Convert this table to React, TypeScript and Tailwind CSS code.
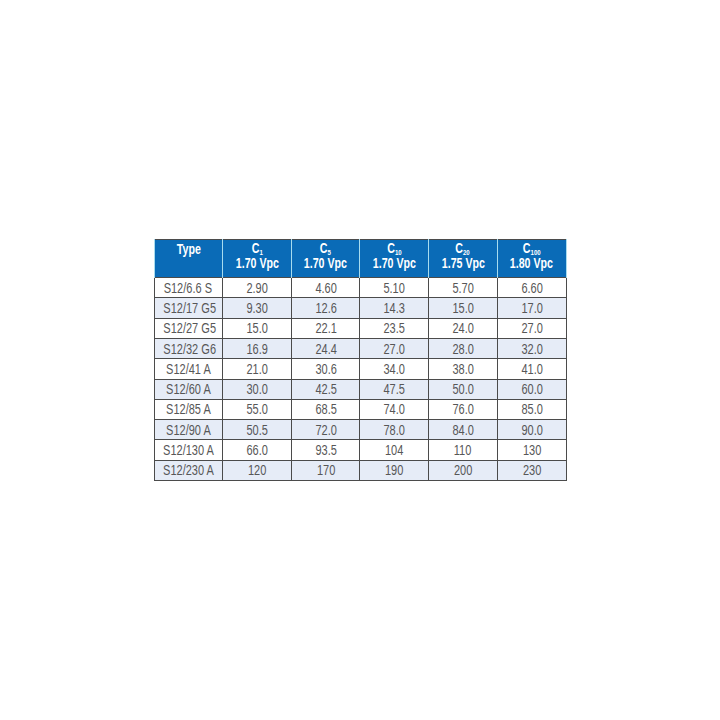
const HEADERS = [
  { sub: "1", volts: "1.70 Vpc" },
  { sub: "5", volts: "1.70 Vpc" },
  { sub: "10", volts: "1.70 Vpc" },
  { sub: "20", volts: "1.75 Vpc" },
  { sub: "100", volts: "1.80 Vpc" },
];

const ROWS: [string, string, string, string, string, string][] = [
  ["S12/6.6 S", "2.90", "4.60", "5.10", "5.70", "6.60"],
  ["S12/17 G5", "9.30", "12.6", "14.3", "15.0", "17.0"],
  ["S12/27 G5", "15.0", "22.1", "23.5", "24.0", "27.0"],
  ["S12/32 G6", "16.9", "24.4", "27.0", "28.0", "32.0"],
  ["S12/41 A", "21.0", "30.6", "34.0", "38.0", "41.0"],
  ["S12/60 A", "30.0", "42.5", "47.5", "50.0", "60.0"],
  ["S12/85 A", "55.0", "68.5", "74.0", "76.0", "85.0"],
  ["S12/90 A", "50.5", "72.0", "78.0", "84.0", "90.0"],
  ["S12/130 A", "66.0", "93.5", "104", "110", "130"],
  ["S12/230 A", "120", "170", "190", "200", "230"],
];

// narrow the Arial-width face to get the condensed look of the original
const Narrow = ({ children }: { children: React.ReactNode }) => (
  <span className="inline-block origin-center scale-x-[0.76] whitespace-nowrap">{children}</span>
);

export default function App() {
  return (
    <div className="flex h-[720px] w-[720px] items-center justify-center bg-white">
      <table
        className="w-[413px] table-fixed border-collapse border border-[#4b4b4b] text-center text-[14px] leading-[16px]"
        style={{ fontFamily: '"Liberation Sans", Arial, sans-serif' }}
      >
        <thead>
          <tr className="h-[38px] bg-[#0a6bb7] text-white">
            <th className="border-x border-[#a8dcef] pt-[1px] align-top font-bold">
              <Narrow>Type</Narrow>
            </th>
            {HEADERS.map((h) => (
              <th key={h.sub} className="border-x border-[#a8dcef] pt-[1px] align-top font-bold">
                <div className="h-[15px] leading-[15px]">
                  <Narrow>
                    C<span className="relative top-[2px] text-[8px] leading-none">{h.sub}</span>
                  </Narrow>
                </div>
                <div className="leading-[15px]">
                  <Narrow>{h.volts}</Narrow>
                </div>
              </th>
            ))}
          </tr>
        </thead>
        <tbody className="text-[14.5px] text-[#575757]">
          {ROWS.map((row, i) => (
            <tr key={row[0]} className={i % 2 === 1 ? "h-[20.3px] bg-[#e6ecf7]" : "h-[20.3px] bg-white"}>
              {row.map((cell, j) => (
                <td key={j} className="border border-[#4b4b4b] p-0">
                  <Narrow>{cell}</Narrow>
                </td>
              ))}
            </tr>
          ))}
        </tbody>
      </table>
    </div>
  );
}
